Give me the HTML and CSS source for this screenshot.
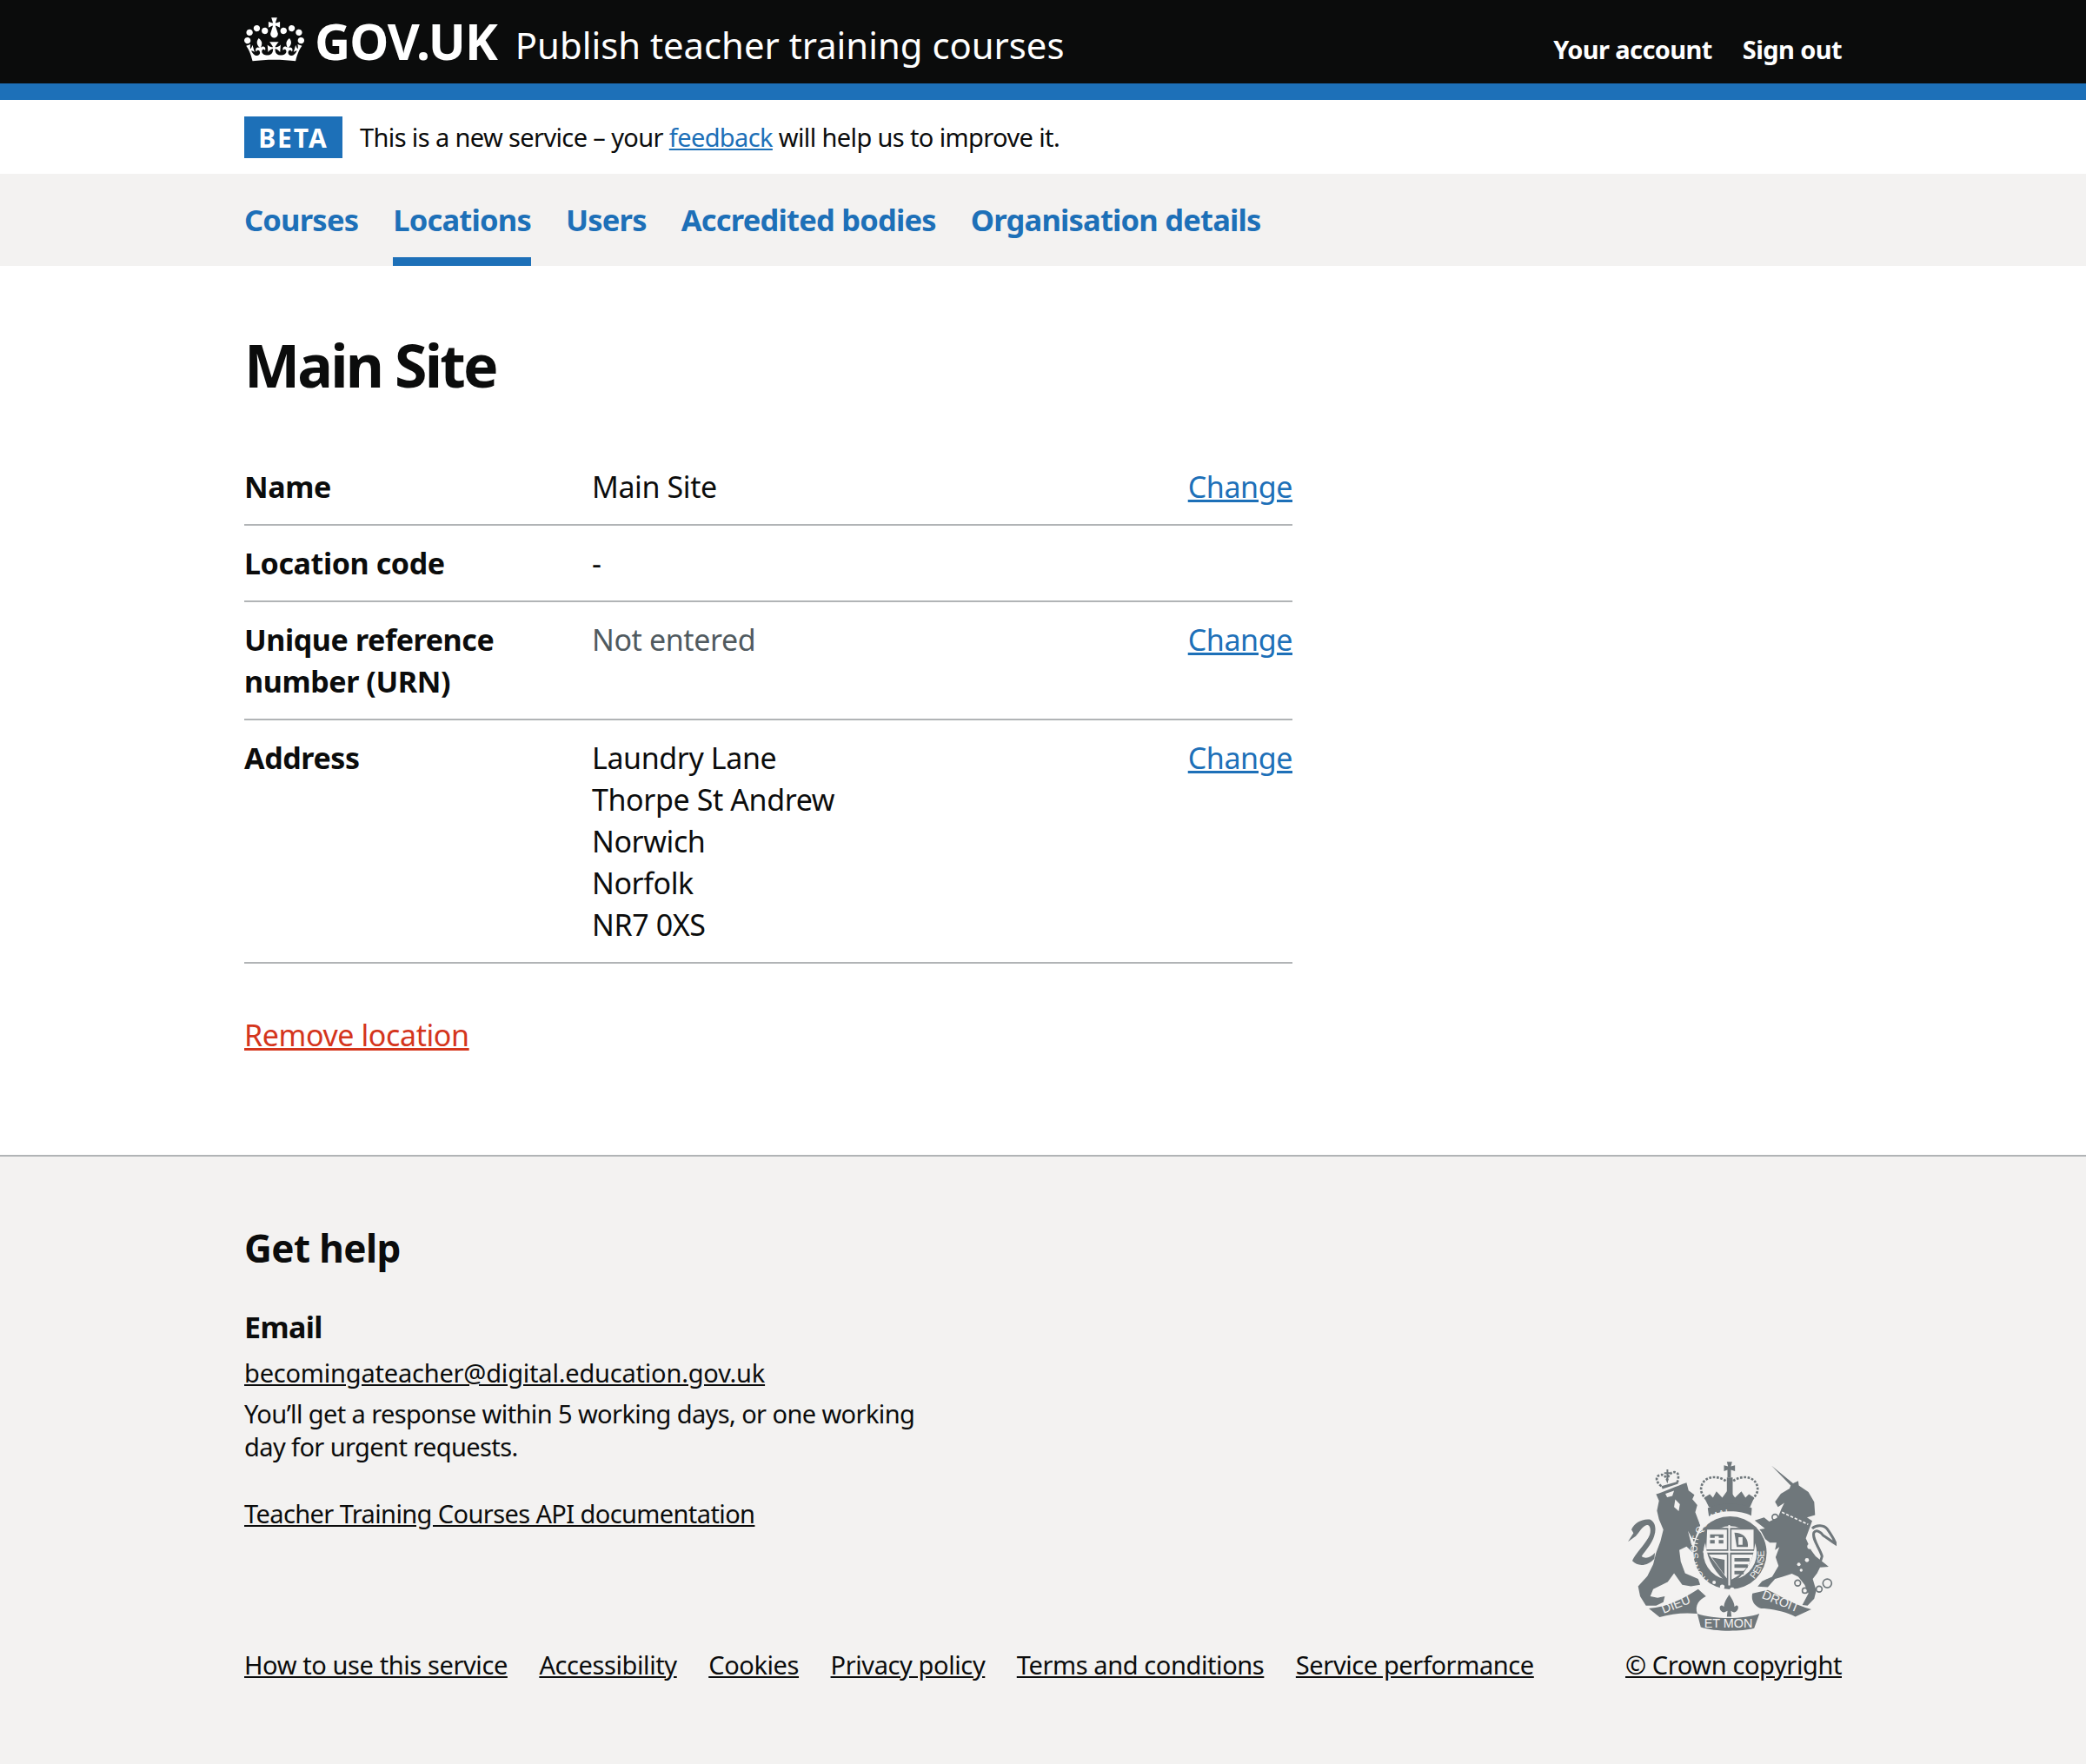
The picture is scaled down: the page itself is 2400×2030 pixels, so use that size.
FILE: index.html
```html
<!DOCTYPE html>
<html lang="en">
<head>
<meta charset="utf-8">
<title>Main Site - Publish teacher training courses - GOV.UK</title>
<link rel="stylesheet" href="styles.css">
</head>
<body>
<header class="header">
  <div class="wrap header-row">
    <a class="logo" href="#">
      <svg class="crown" viewBox="0 0 132 97" aria-hidden="true"><path fill="currentColor" fill-rule="evenodd" d="M25 30.2c3.5 1.5 7.7-.2 9.1-3.7 1.5-3.6-.2-7.8-3.9-9.2-3.6-1.4-7.6.3-9.1 3.9-1.4 3.5.3 7.5 3.9 9zM9 39.5c3.6 1.5 7.8-.2 9.2-3.7 1.5-3.6-.2-7.8-3.9-9.1-3.6-1.5-7.6.2-9.1 3.8-1.4 3.5.3 7.5 3.8 9zM4.4 57.2c3.5 1.5 7.7-.2 9.1-3.8 1.5-3.6-.2-7.7-3.9-9.1-3.5-1.5-7.6.3-9.1 3.8-1.4 3.5.3 7.6 3.9 9.1zm38.3-21.4c3.5 1.5 7.7-.2 9.1-3.8 1.5-3.6-.2-7.7-3.9-9.1-3.6-1.5-7.6.3-9.1 3.8-1.3 3.6.4 7.7 3.9 9.1zm64.4-5.6c-3.6 1.5-7.8-.2-9.1-3.7-1.5-3.6.2-7.8 3.8-9.2 3.6-1.4 7.7.3 9.2 3.9 1.3 3.5-.4 7.5-3.9 9zm15.9 9.3c-3.6 1.5-7.7-.2-9.1-3.7-1.5-3.6.2-7.8 3.7-9.1 3.6-1.5 7.7.2 9.2 3.8 1.5 3.5-.3 7.5-3.8 9zm4.7 17.7c-3.6 1.5-7.8-.2-9.2-3.8-1.5-3.6.2-7.7 3.9-9.1 3.6-1.5 7.7.3 9.2 3.8 1.3 3.5-.4 7.6-3.9 9.1zM89.3 35.8c-3.6 1.5-7.8-.2-9.2-3.8-1.4-3.6.2-7.7 3.9-9.1 3.6-1.5 7.7.3 9.2 3.8 1.4 3.6-.3 7.7-3.9 9.1zM69.7 17.7l8.9 4.7V9.3l-8.9 2.8c-.2-.3-.5-.6-.9-.9L72.4 0H59.6l3.5 11.2c-.3.3-.6.5-.9.9l-8.8-2.8v13.1l8.8-4.7c.3.3.6.7.9.9l-5 15.4v.1c-.2.8-.4 1.6-.4 2.4 0 4.1 3.1 7.5 7 8.1h.2c.3 0 .7.1 1 .1.4 0 .7 0 1-.1h.2c4-.6 7.1-4.1 7.1-8.1 0-.8-.1-1.7-.4-2.4V34l-5.1-15.4c.4-.2.7-.6 1-.9zM66 92.8c16.9 0 32.8 1.1 47.1 3.2 4-16.9 8.9-26.7 14-33.5l-9.6-3.4c1 4.9 1.1 7.2 0 10.2-1.5-1.4-3-4.3-4.2-8.7L108.6 76c2.8-2 5-3.2 7.5-3.3-4.4 9.4-10 11.9-13.6 11.2-4.3-.8-6.3-4.6-5.6-7.9 1-4.7 5.7-5.9 8-.5 4.3-8.7-3-11.4-7.6-8.8 7.1-7.2 7.9-13.5 2.1-21.1-8 6.1-8.1 12.3-4.5 20.8-4.7-5.4-12.1-2.5-9.5 6.2 3.4-5.2 7.9-2 7.2 3.1-.6 4.3-6.4 7.8-13.5 7.2-10.3-.9-10.9-8-11.2-13.8 2.5-.5 7.1 1.8 11 7.3L80.2 60c-4.1 4.4-8 5.3-12.3 5.4 1.4-4.4 8-11.6 8-11.6H55.5s6.4 7.2 7.9 11.6c-4.2-.1-8-1-12.3-5.4l1.4 16.4c3.9-5.5 8.5-7.7 10.9-7.3-.3 5.8-.9 12.8-11.1 13.8-7.2.6-12.9-2.9-13.5-7.2-.7-5 3.8-8.3 7.1-3.1 2.7-8.7-4.6-11.6-9.4-6.2 3.7-8.5 3.6-14.7-4.6-20.8-5.8 7.6-5 13.9 2.2 21.1-4.7-2.6-11.9.1-7.7 8.8 2.3-5.5 7.1-4.2 8.1.5.7 3.3-1.3 7.1-5.7 7.9-3.5.7-9-1.8-13.5-11.2 2.5.1 4.7 1.3 7.5 3.3l-4.7-15.4c-1.2 4.4-2.7 7.2-4.3 8.7-1.1-3-.9-5.3 0-10.2l-9.5 3.4c5 6.9 9.9 16.7 14 33.5 14.8-2.1 30.8-3.2 47.7-3.2z"/></svg>
      <span class="logo-text">GOV.UK</span>
    </a>
    <a class="service-name" href="#">Publish teacher training courses</a>
    <nav class="account">
      <a href="#">Your account</a>
      <a href="#">Sign out</a>
    </nav>
  </div>
</header>
<div class="wrap beta">
  <strong class="tag">BETA</strong>
  <span class="beta-text">This is a new service – your <a href="#">feedback</a> will help us to improve it.</span>
</div>
<nav class="tabs">
  <ul class="wrap tab-list">
    <li><a href="#">Courses</a></li>
    <li><a class="current" href="#">Locations</a></li>
    <li><a href="#">Users</a></li>
    <li><a href="#">Accredited bodies</a></li>
    <li><a href="#">Organisation details</a></li>
  </ul>
</nav>
<main class="wrap main">
  <h1 class="title">Main Site</h1>
  <dl class="summary">
    <div class="row">
      <dt>Name</dt>
      <dd>Main Site</dd>
      <dd class="action"><a href="#">Change</a></dd>
    </div>
    <div class="row">
      <dt>Location code</dt>
      <dd>-</dd>
      <dd class="action"></dd>
    </div>
    <div class="row">
      <dt>Unique reference number (URN)</dt>
      <dd class="muted">Not entered</dd>
      <dd class="action"><a href="#">Change</a></dd>
    </div>
    <div class="row">
      <dt>Address</dt>
      <dd>Laundry Lane<br>Thorpe St Andrew<br>Norwich<br>Norfolk<br>NR7 0XS</dd>
      <dd class="action"><a href="#">Change</a></dd>
    </div>
  </dl>
  <p class="remove"><a href="#">Remove location</a></p>
</main>
<footer class="footer">
  <div class="wrap">
    <h2 class="help-title">Get help</h2>
    <h3 class="help-sub">Email</h3>
    <p class="help-link"><a href="#">becomingateacher@digital.education.gov.uk</a></p>
    <p class="help-note">You’ll get a response within 5 working days, or one working day for urgent requests.</p>
    <div class="footer-mid">
      <p class="api"><a href="#">Teacher Training Courses API documentation</a></p>
      <svg class="crest" viewBox="100 60 722 592" role="img" aria-label="Royal coat of arms">
        <defs>
          <path id="garter-top" d="M352 410 A112 112 0 1 1 566 366"/>
          <path id="garter-left" d="M388 478 A122 122 0 0 1 340 412"/>
          <path id="garter-right" d="M520 486 A122 122 0 0 0 572 376"/>
        </defs>
        <g class="crest-fill">
          <path d="M200 178C225 170 270 150 305 138L312 165 332 180 325 195 342 215 335 240 352 285 338 320 332 345 310 304 322 352 350 385 345 400 328 380 305 358 280 370 285 410 300 450 345 470 352 490 320 495 290 490 262 450 240 480 190 505 180 530 205 535 230 530 225 550 200 562 165 562 145 530 138 495 170 460 190 420 200 380 215 340 225 300 210 265 203 235 210 200Z"/>
          <path class="crest-bg-shape" d="M232 176L262 166 256 184 238 188ZM266 196L282 212 278 236 262 222Z"/>
          <path d="M115 300C125 278 150 262 178 265 196 272 202 295 194 320 186 350 160 375 150 392 165 402 180 396 196 380L194 400C175 422 140 432 118 408 125 385 165 350 178 318 184 298 178 282 168 284 152 288 142 310 130 322L103 342 122 312Z"/>
          <path class="crest-line thin" d="M218 150C200 136 196 118 212 112 224 108 232 114 238 128 242 110 256 96 272 104 280 112 276 130 272 140"/>
          <path d="M218 150L274 134 276 142 222 160ZM228 102H236V92H242V102H248V108H242V130H236V108H228Z"/>
          <path d="M598 80L672 140 690 132 692 148 725 170 745 205 748 250 720 258 738 270 716 330 735 372 750 392 785 420 795 428 765 430 755 450 740 470 752 510 745 538 722 562 704 560 725 520 712 490 690 462 668 452 636 462 610 470 585 498 550 496 565 478 600 462 622 425 612 395 625 360 610 370 615 345 592 345 560 320 552 300 575 296 540 268 572 258 590 272 620 258 632 228 642 208 620 222 610 204 630 176 660 158 664 148Z"/>
          <path class="crest-bg-line thin-bg" d="M634 240L724 282"/>
          <circle class="crest-bg" cx="692" cy="420" r="6"/>
          <circle class="crest-bg" cx="720" cy="405" r="7"/>
          <circle class="crest-bg" cx="700" cy="440" r="5"/>
          <circle class="crest-bg" cx="730" cy="358" r="9"/>
          <path class="crest-line" d="M738 296C752 282 780 284 790 298 800 312 812 330 820 350 804 340 792 330 776 320 768 308 752 298 744 310 736 330 766 368 772 392 768 410 758 424 750 425"/>
          <circle class="crest-ring" cx="688" cy="484" r="10"/>
          <circle class="crest-ring" cx="713" cy="510" r="9"/>
          <circle class="crest-ring" cx="762" cy="505" r="10"/>
          <circle class="crest-ring" cx="790" cy="485" r="15"/>
          <circle class="crest-ring" cx="610" cy="257" r="10"/>
          <path d="M444 66H462L458 82 472 78V98L458 94V120H446V94L434 98V78L448 82Z"/>
          <path d="M444 120H464V188H444Z"/>
          <path d="M366 190L385 178 396 190 408 168 428 190 450 160 472 190 494 168 508 190 520 178 538 190 524 222H382Z"/>
          <path d="M378 226C420 206 490 206 530 226L528 252C490 232 420 232 382 254Z"/>
          <path class="crest-line thin" d="M440 132C410 110 360 115 355 158 354 175 366 190 376 196M466 132C496 110 546 115 550 158 551 175 538 190 528 196"/>
          <circle class="crest-bg" cx="455" cy="380" r="130"/>
          <circle cx="455" cy="380" r="126"/>
          <circle class="crest-bg" cx="455" cy="380" r="92"/>
          <path d="M370 294H541C548 370 530 440 455 490 385 440 362 370 370 294Z"/>
          <path class="crest-bg-line" d="M452 284V492M362 376H546"/>
          <path class="crest-bg-shape" d="M376 300H444V368H373ZM460 300H536V368H460ZM382 386H444V468ZM460 386H534C526 420 502 452 460 472Z"/>
          <path d="M386 316H432V328H386ZM386 336H432V348H386ZM470 310C500 310 520 330 516 360H478ZM470 398H522V410H470ZM470 420H516V432H470ZM392 396L436 404 436 456ZM470 442H502V454H470Z"/>
          <path class="crest-bg-shape" d="M402 322H416V362H402ZM484 326H498V352H484Z"/>
          <text class="garter-text"><textPath href="#garter-top" startOffset="3%">SOIT QUI MAL</textPath></text>
          <text class="garter-text"><textPath href="#garter-left" startOffset="8%">HONI</textPath></text>
          <text class="garter-text"><textPath href="#garter-right" startOffset="18%">PENSE</textPath></text>
          <circle class="crest-bg" cx="428" cy="497" r="8"/>
          <circle class="crest-bg" cx="462" cy="507" r="8"/>
          <circle class="crest-bg" cx="400" cy="482" r="6"/>
          <path d="M175 572C240 566 290 540 345 505L372 530C350 540 332 560 342 590 300 585 250 590 212 602Z"/>
          <path d="M342 590C400 610 500 610 556 590L538 640C490 652 400 652 354 636Z"/>
          <path d="M532 520L585 508C630 530 680 560 735 575L680 600C650 585 600 572 562 572 540 565 526 545 532 520Z"/>
          <path d="M452 524C462 540 470 552 470 566 482 552 488 570 478 580 470 590 462 582 458 580L460 600H444L446 580C440 582 432 590 424 580 414 570 422 552 434 566 434 552 442 540 452 524Z"/>
          <text class="banner-text" transform="translate(226 590) rotate(-22)">DIEU</text>
          <text class="banner-text" x="366" y="638">ET MON</text>
          <text class="banner-text" transform="translate(562 535) rotate(22)">DROIT</text>
        </g>
      </svg>
    </div>
    <div class="footer-links">
      <ul class="meta">
        <li><a href="#">How to use this service</a></li>
        <li><a href="#">Accessibility</a></li>
        <li><a href="#">Cookies</a></li>
        <li><a href="#">Privacy policy</a></li>
        <li><a href="#">Terms and conditions</a></li>
        <li><a href="#">Service performance</a></li>
      </ul>
      <a class="copyright" href="#">© Crown copyright</a>
    </div>
  </div>
</footer>
</body>
</html>
```
FILE: styles.css
```css
* { box-sizing: border-box; }
html, body { margin: 0; padding: 0; }
body {
  font-family: "Noto Sans", Lato, sans-serif;
  font-size: 34px;
  line-height: 48px;
  color: #0b0c0c;
  background: #fff;
  letter-spacing: -0.4px;
}
a { color: inherit; }
ul { list-style: none; margin: 0; padding: 0; }
.wrap { width: 1838px; margin-left: 281px; }

.header { background: #0b0c0c; border-bottom: 19px solid #1d70b8; height: 115px; color: #fff; }
.header-row { display: flex; align-items: flex-start; height: 96px; }
.header a { color: #fff; text-decoration: none; }
.logo { display: flex; align-items: center; margin-top: 20px; height: 51px; }
.crown { width: 69px; height: 51px; display: block; }
.logo-text { font-weight: 700; font-size: 57px; line-height: 51px; letter-spacing: -1px; margin-left: 12px; padding-top: 3px; }
.service-name { font-size: 41.8px; line-height: 58px; margin-left: 21px; margin-top: 23px; letter-spacing: 0; }
.account { margin-left: auto; display: flex; gap: 35px; margin-top: 34px; font-size: 29px; font-weight: 700; line-height: 46px; letter-spacing: -0.6px; }

.beta { display: flex; align-items: center; height: 85px; }
.tag { background: #1d70b8; color: #fff; width: 113px; height: 48px; font-size: 30px; line-height: 50px; text-align: center; letter-spacing: 2px; }
.beta-text { margin-left: 20px; font-size: 29px; letter-spacing: -0.62px; }
.beta-text a, .action a { color: #1d70b8; }

.tabs { background: #f3f2f1; height: 106px; }
.tab-list { display: flex; gap: 40px; }
.tab-list a { display: block; height: 106px; padding-top: 29px; font-size: 34.5px; font-weight: 700; color: #1d70b8; text-decoration: none; letter-spacing: -0.8px; }
.tab-list a.current { border-bottom: 10px solid #1d70b8; }

.main { padding-top: 61px; }
.title { margin: 0 0 44px; font-size: 68px; line-height: 106px; font-weight: 700; letter-spacing: -2.8px; }
.summary { width: 1206px; margin: 0; }
.row { display: grid; grid-template-columns: 400px 1fr auto; border-bottom: 2px solid #b1b4b6; padding: 19px 0; }
.row dt { font-weight: 700; padding-right: 40px; }
.row dd { margin: 0; }
.muted { color: #505a5f; }
.remove { margin: 58px 0 0; color: #d4351c; }

.footer { margin-top: 114px; border-top: 2px solid #b1b4b6; background: #f3f2f1; height: 701px; font-size: 29px; letter-spacing: -0.6px; }
.help-title { margin: 0; padding-top: 76px; font-size: 44px; line-height: 58px; font-weight: 700; }
.help-sub { margin: 39px 0 0; font-size: 34px; line-height: 47px; font-weight: 700; }
.help-link { margin: 9px 0 0; line-height: 40px; letter-spacing: -0.2px; }
.help-note { margin: 8px 0 0; line-height: 38.4px; width: 800px; }
.footer-mid { display: flex; justify-content: space-between; align-items: flex-start; height: 0; }
.api { margin: 37px 0 0; line-height: 40px; }
.crest { width: 241px; height: 198px; margin-right: 6px; margin-top: -5px; display: block; flex: none; }
.crest-fill { fill: #6f777b; }
.crest-line { fill: none; stroke: #6f777b; stroke-width: 9; }
.crest-line.thin { stroke-width: 8; stroke-dasharray: 8 5; }
.crest-ring { fill: none; stroke: #6f777b; stroke-width: 5; }
.crest-bg { fill: #f3f2f1; }
.crest-bg-line { fill: none; stroke: #f3f2f1; stroke-width: 6; }
.crest-bg-line.thin-bg { stroke-width: 5; stroke-dasharray: 10 6; }
.crest-bg-shape { fill: #f3f2f1; }
.garter-text { font-family: "Liberation Sans", sans-serif; font-size: 32px; fill: #f3f2f1; letter-spacing: 0; }
.banner-text { font-family: "Liberation Sans", sans-serif; font-size: 43px; fill: #f3f2f1; letter-spacing: 0; }
.footer-links { display: flex; justify-content: space-between; margin-top: 211px; line-height: 40px; letter-spacing: -0.4px; }
.meta { display: flex; gap: 36.5px; }
```
